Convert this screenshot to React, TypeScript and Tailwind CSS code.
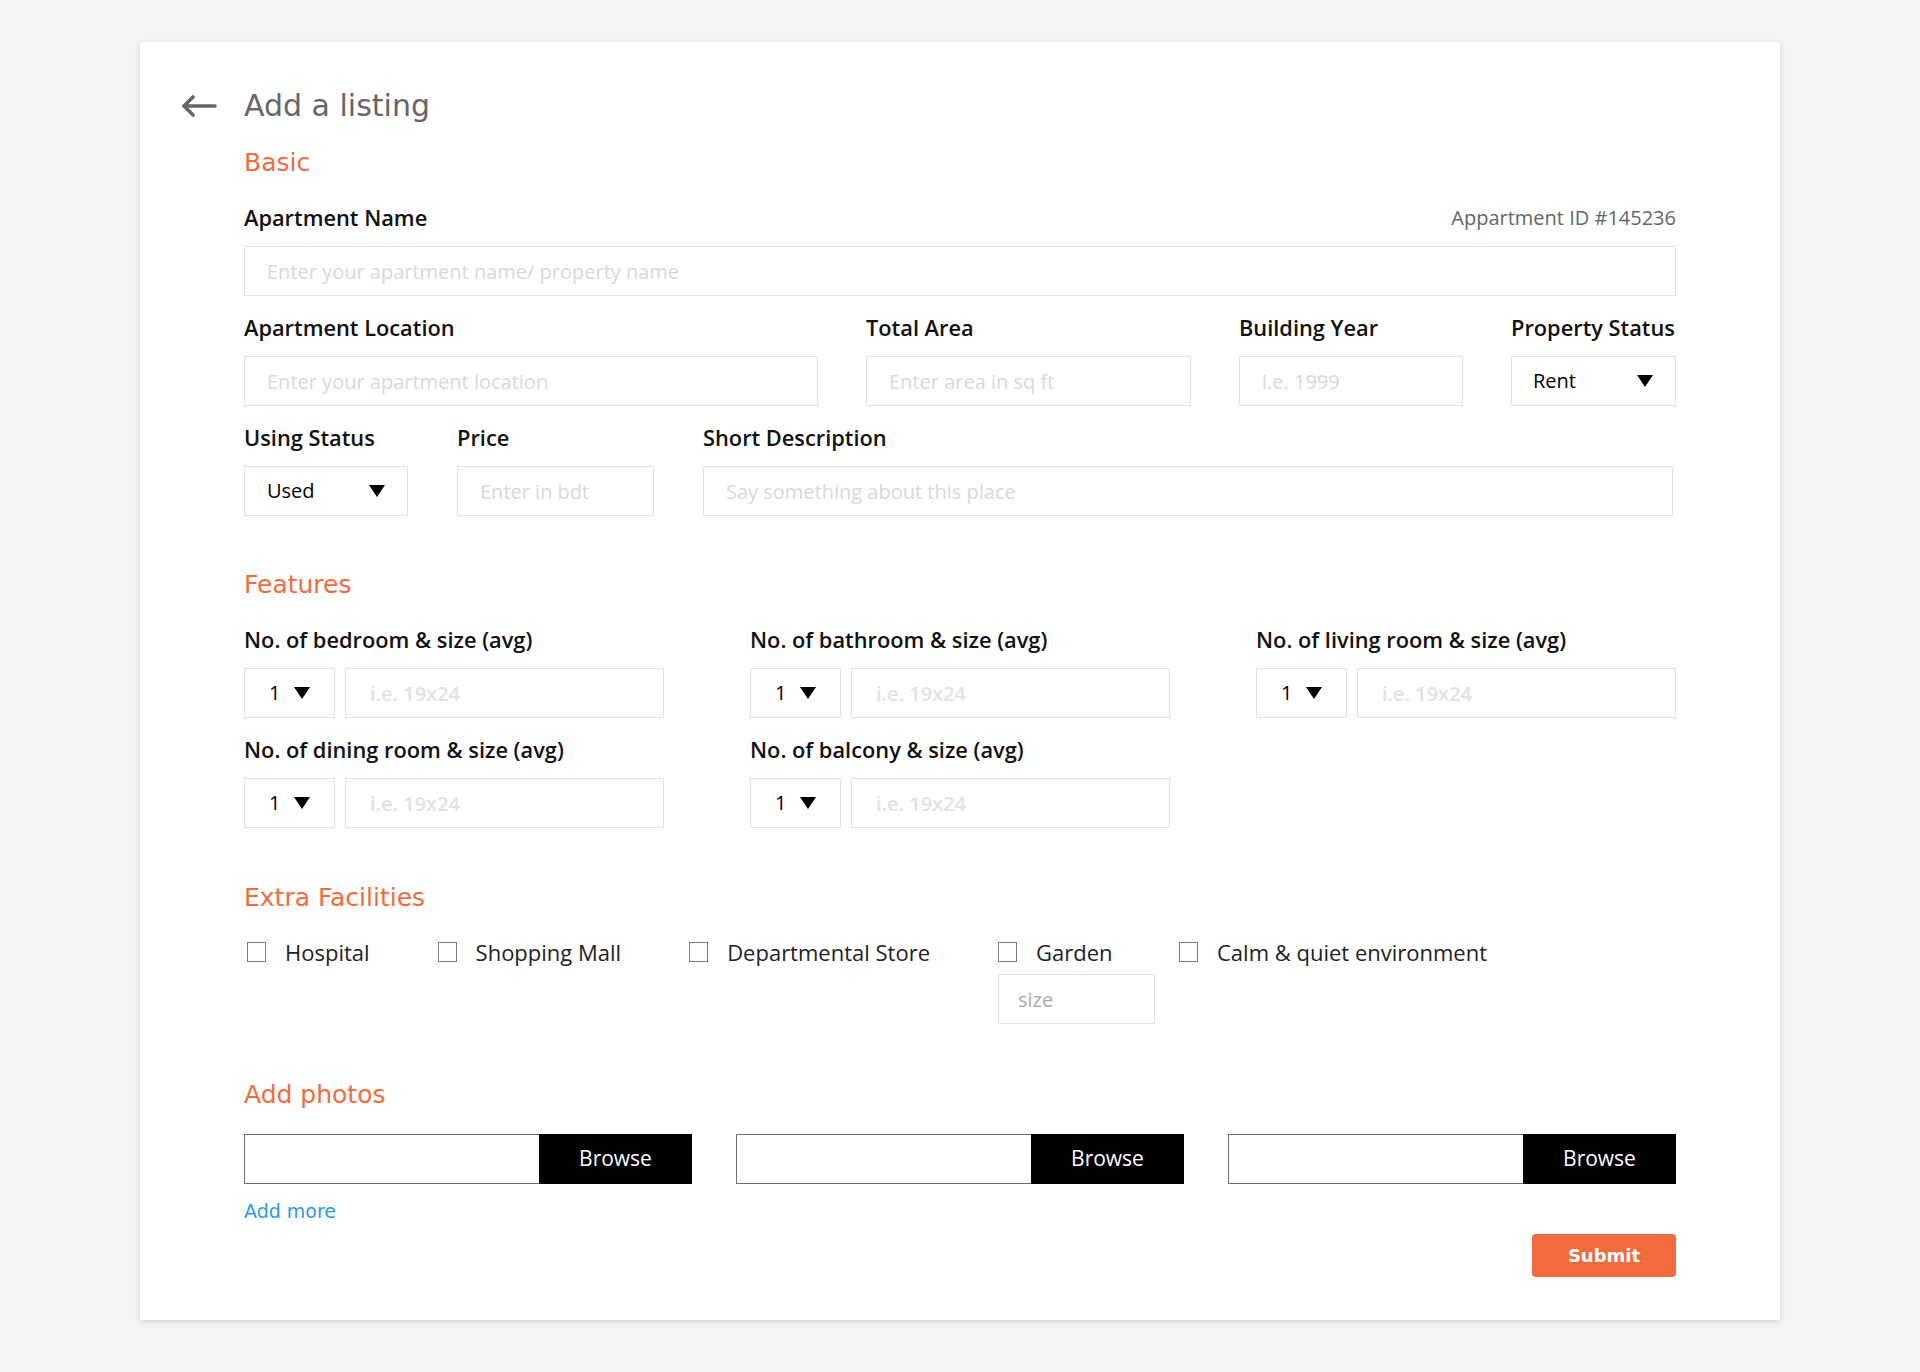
import React from "react";

const heading = "font-['DejaVu_Sans',sans-serif] text-[25px] leading-[32px] text-[#f26b3d]";
const label = "font-['Open_Sans',sans-serif] text-[21.8px] leading-[30px] font-semibold text-[#111]";
const inputBox =
  "h-[50px] w-full border border-[#e3e3e3] bg-white px-[22px] font-['Open_Sans',sans-serif] text-[20px] text-black outline-none placeholder:text-[#d9d9d9]";

function Caret() {
  return (
    <svg width="16" height="12" viewBox="0 0 16 12" className="shrink-0">
      <path d="M0 0h16L8 12z" fill="#000" />
    </svg>
  );
}

function Select({ value, className = "" }: { value: string; className?: string }) {
  return (
    <div
      className={`flex h-[50px] shrink-0 items-center justify-between border border-[#e3e3e3] bg-white px-[22px] font-['Open_Sans',sans-serif] text-[20px] text-black ${className}`}
    >
      <span>{value}</span>
      <Caret />
    </div>
  );
}

function Field({ title, className = "", children }: { title: string; className?: string; children: React.ReactNode }) {
  return (
    <div className={`flex flex-col ${className}`}>
      <div className={label}>{title}</div>
      <div className="mt-[13px]">{children}</div>
    </div>
  );
}

function Feature({ title }: { title: string }) {
  return (
    <Field title={title}>
      <div className="flex gap-[10px]">
        <Select value="1" className="w-[91px] pl-[24px] pr-[24px]" />
        <input
          className={`${inputBox} flex-1 pl-[24px] placeholder:font-semibold placeholder:text-[#e2e2e2]`}
          placeholder="i.e. 19x24"
        />
      </div>
    </Field>
  );
}

function Check({ text, children }: { text: string; children?: React.ReactNode }) {
  return (
    <div className="flex flex-col">
      <label className="flex items-center gap-[19px] font-['Open_Sans',sans-serif] text-[22px] leading-[30px] text-[#222]">
        <span className="h-[20px] w-[19px] shrink-0 border border-[#7a7a7a] bg-white" />
        <span>{text}</span>
      </label>
      {children}
    </div>
  );
}

function FileBox() {
  return (
    <div className="flex h-[50px]">
      <div className="flex-1 border border-r-0 border-[#6f6f6f] bg-white" />
      <button className="w-[153px] bg-black font-['Open_Sans',sans-serif] text-[21px] text-white">Browse</button>
    </div>
  );
}

export default function App() {
  return (
    <div className="min-h-screen bg-[#f4f4f4] pt-[42px] pb-[52px]">
      <div className="mx-auto w-[1640px] bg-white px-[104px] pt-[44px] pb-[43px] shadow-[0_2px_6px_rgba(0,0,0,0.12)]">
        {/* Header */}
        <div className="-ml-[63px] flex items-center gap-[27px]">
          <svg width="36" height="22" viewBox="0 0 36 22" fill="none" stroke="#666" strokeWidth="3.6" strokeLinecap="round" strokeLinejoin="round">
            <path d="M34 11H3" />
            <path d="M12 2L3 11l9 9" />
          </svg>
          <h1 className="font-['DejaVu_Sans',sans-serif] text-[30px] leading-[40px] text-[#666]">Add a listing</h1>
        </div>

        {/* Basic */}
        <h2 className={`${heading} mt-[21px]`}>Basic</h2>

        <div className="mt-[24px] flex items-center justify-between">
          <div className={label}>Apartment Name</div>
          <div className="font-['Open_Sans',sans-serif] text-[20px] leading-[30px] text-[#666]">Appartment ID #145236</div>
        </div>
        <input className={`${inputBox} mt-[13px]`} placeholder="Enter your apartment name/ property name" />

        <div className="mt-[17px] flex gap-[48px]">
          <Field title="Apartment Location" className="w-[574px]">
            <input className={inputBox} placeholder="Enter your apartment location" />
          </Field>
          <Field title="Total Area" className="w-[325px]">
            <input className={inputBox} placeholder="Enter area in sq ft" />
          </Field>
          <Field title="Building Year" className="w-[224px]">
            <input className={inputBox} placeholder="i.e. 1999" />
          </Field>
          <Field title="Property Status" className="flex-1">
            <Select value="Rent" className="pl-[21px]" />
          </Field>
        </div>

        <div className="mt-[17px] flex gap-[49px]">
          <Field title="Using Status" className="w-[164px]">
            <Select value="Used" />
          </Field>
          <Field title="Price" className="w-[197px]">
            <input className={inputBox} placeholder="Enter in bdt" />
          </Field>
          <Field title="Short Description" className="flex-1 pr-[3px]">
            <input className={inputBox} placeholder="Say something about this place" />
          </Field>
        </div>

        {/* Features */}
        <h2 className={`${heading} mt-[53px]`}>Features</h2>
        <div className="mt-[24px] grid grid-cols-3 gap-x-[86px] gap-y-[17px]">
          <Feature title="No. of bedroom & size (avg)" />
          <Feature title="No. of bathroom & size (avg)" />
          <Feature title="No. of living room & size (avg)" />
          <Feature title="No. of dining room & size (avg)" />
          <Feature title="No. of balcony & size (avg)" />
        </div>

        {/* Extra facilities */}
        <h2 className={`${heading} mt-[54px]`}>Extra Facilities</h2>
        <div className="mt-[23px] flex items-start gap-[68px] pl-[3px]">
          <Check text="Hospital" />
          <Check text="Shopping Mall" />
          <Check text="Departmental Store" />
          <div className="w-[113px]">
            <Check text="Garden">
              <input
                className="mt-[7px] h-[50px] w-[157px] shrink-0 border border-[#e3e3e3] bg-white px-[19px] font-['Open_Sans',sans-serif] text-[20px] outline-none placeholder:text-[#a9a9a9]"
                placeholder="size"
              />
            </Check>
          </div>
          <Check text="Calm & quiet environment" />
        </div>

        {/* Photos */}
        <h2 className={`${heading} mt-[55px]`}>Add photos</h2>
        <div className="mt-[23px] grid grid-cols-3 gap-[44px]">
          <FileBox />
          <FileBox />
          <FileBox />
        </div>
        <a href="#" className="mt-[14px] block w-fit font-['DejaVu_Sans',sans-serif] text-[19px] leading-[26px] text-[#2d9be6]">
          Add more
        </a>
        <div className="mt-[10px] flex justify-end">
          <button className="h-[43px] w-[144px] rounded-[4px] bg-[#f26b3d] font-['DejaVu_Sans',sans-serif] text-[18px] font-bold text-white">
            Submit
          </button>
        </div>
      </div>
    </div>
  );
}
